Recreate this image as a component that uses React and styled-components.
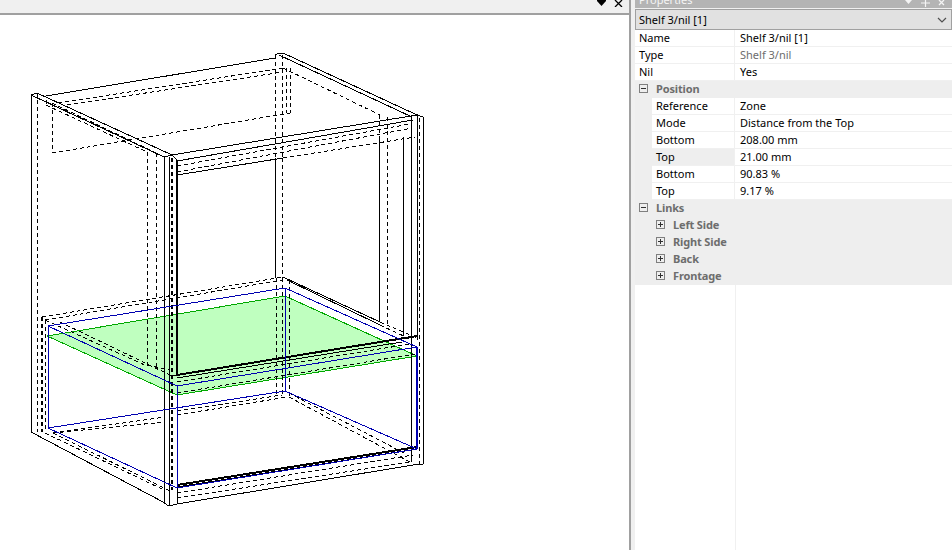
import React from 'react';
import styled, { createGlobalStyle } from 'styled-components';

const GlobalStyle = createGlobalStyle`
  html, body {
    margin: 0;
    padding: 0;
    background: #f0f0f0;
    overflow: hidden;
  }
`;

const BLACK = '#000000';
const BLUE = '#0000b0';
const GREEN = '#00a800';
const BAR_HEIGHT = 15;

// [x1, y1, x2, y2, kind] kind: s solid, d dashed, t thick, td thick dashed
const cabinetLines = [
  // left side, outer
  [31, 95, 31, 432, 's'], [37, 93, 37, 432, 'd'], [31, 95, 37, 93, 's'],
  [37, 93, 172, 155, 's'], [31, 95, 164, 157, 's'], [40, 99, 164, 157, 's'],
  [46, 105, 147, 152, 'd'], [52, 103, 156, 153, 'd'],
  // back top rail
  [46, 96, 275, 58, 's'], [58, 103, 283, 68, 'd'], [67, 105, 283, 72, 'd'],
  [52, 153, 290, 113, 'd'], [52, 103, 52, 153, 'd'], [46, 100, 46, 105, 'd'],
  [275, 55, 279, 53, 's'], [279, 53, 283, 53, 's'],
  // back corner
  [275, 55, 275, 157, 'd'], [282, 55, 282, 157, 'd'], [286, 68, 286, 113, 'd'], [290, 68, 290, 113, 'd'],
  [275, 158, 275, 278, 's'], [282, 158, 282, 278, 'd'],
  [283, 53, 415, 114, 's'], [279, 55, 412, 117, 's'], [283, 68, 380, 115, 'd'],
  // front top rail
  [172, 155, 417, 115, 's'], [177, 161, 413, 120, 's'], [177, 172, 412, 128, 'd'],
  [177, 175, 283, 158, 's'], [283, 158, 415, 137, 'd'], [177, 166, 410, 124, 'd'],
  // front corner
  [164, 157, 164, 503, 's'], [169, 157, 169, 506, 's'], [172, 158, 172, 490, 'td'],
  [177, 160, 177, 375, 't'], [147, 152, 147, 365, 'd'], [156, 153, 156, 367, 'd'],
  [164, 157, 172, 155, 's'], [172, 155, 177, 160, 's'],
  [164, 503, 169, 506, 's'], [169, 506, 177, 504, 's'], [177, 488, 177, 504, 's'],
  // right corner
  [379, 115, 379, 140, 'd'], [379, 140, 379, 322, 's'], [387, 117, 387, 325, 'd'],
  [403, 137, 403, 336, 's'], [411, 115, 411, 462, 's'], [417, 115, 417, 340, 's'],
  [419, 118, 419, 464, 'd'], [423, 117, 423, 464, 's'], [415, 114, 423, 117, 's'],
  // zone lines behind the shelf
  [42, 317, 283, 277, 'd'], [45, 320, 283, 280, 'd'], [42, 317, 42, 432, 'td'], [45, 320, 45, 432, 'd'],
  [283, 277, 380, 322, 's'], [380, 322, 417, 338, 'd'], [287, 280, 380, 325, 's'], [380, 325, 410, 339, 'd'],
  [45, 320, 147, 366, 'd'], [60, 322, 170, 375, 'd'], [147, 365, 170, 370, 'd'],
  [276, 278, 276, 395, 'd'], [282, 278, 282, 395, 'd'], [289, 280, 289, 397, 'd'],
  // rail under the shelf
  [177, 375, 417, 336, 't'], [177, 378, 402, 342, 's'], [177, 382, 410, 344, 'd'],
  [177, 393, 415, 354, 'd'], [170, 375, 177, 375, 's'],
  // floor
  [60, 432, 165, 417, 'd'], [53, 433, 165, 422, 'd'], [177, 415, 287, 397, 'd'], [177, 411, 282, 395, 'd'],
  [31, 432, 165, 503, 's'], [45, 433, 164, 490, 'd'], [53, 433, 172, 492, 'd'],
  [289, 397, 410, 462, 'd'], [289, 393, 404, 453, 'd'],
  // front bottom rail
  [177, 485, 417, 447, 't'], [177, 487, 410, 450, 's'], [177, 493, 413, 455, 'd'],
  [177, 498, 410, 462, 'd'], [177, 504, 413, 465, 's'], [413, 465, 423, 464, 's'],
];

const blueLines = [
  [48, 326, 285, 288], [48, 326, 177, 386], [177, 386, 417, 347], [285, 288, 417, 347],
  [48, 428, 285, 391], [48, 428, 177, 488], [177, 488, 417, 449], [285, 391, 417, 449],
  [48, 326, 48, 428], [177, 386, 177, 488], [285, 288, 285, 391],
];

function lineProps(kind) {
  if (kind === 'd') return { strokeWidth: 1, strokeDasharray: '4 3' };
  if (kind === 'td') return { strokeWidth: 2, strokeDasharray: '4 3' };
  if (kind === 't') return { strokeWidth: 2 };
  return { strokeWidth: 1 };
}

function CabinetDrawing() {
  return (
    <Drawing viewBox={`0 ${BAR_HEIGHT} 629 535`} width="629" height="535">
      <polygon
        points="47,336 285,296 417,356 177,395"
        fill="#bfffbf"
        stroke={GREEN}
        strokeWidth="1"
        shapeRendering="crispEdges"
      />
      <g stroke={BLACK} shapeRendering="crispEdges" fill="none">
        {cabinetLines.map(([x1, y1, x2, y2, kind], i) => (
          <line key={i} x1={x1} y1={y1} x2={x2} y2={y2} {...lineProps(kind)} />
        ))}
      </g>
      <g stroke={BLUE} shapeRendering="crispEdges" fill="none" strokeWidth="1">
        {blueLines.map(([x1, y1, x2, y2], i) => (
          <line key={i} x1={x1} y1={y1} x2={x2} y2={y2} />
        ))}
        <line x1="417" y1="347" x2="417" y2="449" strokeWidth="2" />
      </g>
    </Drawing>
  );
}

function ExpandBox({ open }) {
  return (
    <BoxIcon width="9" height="9" viewBox="0 0 9 9">
      <rect x="0.5" y="0.5" width="8" height="8" fill="none" stroke="#7f7f7f" />
      <line x1="2" y1="4.5" x2="7" y2="4.5" stroke="#303030" />
      {!open && <line x1="4.5" y1="2" x2="4.5" y2="7" stroke="#303030" />}
    </BoxIcon>
  );
}

const plainRows = [
  ['Name', 'Shelf 3/nil [1]'],
  ['Type', 'Shelf 3/nil', true],
  ['Nil', 'Yes'],
];

const positionRows = [
  ['Reference', 'Zone'],
  ['Mode', 'Distance from the Top'],
  ['Bottom', '208.00 mm'],
  ['Top', '21.00 mm', false, true],
  ['Bottom', '90.83 %'],
  ['Top', '9.17 %'],
];

const linkRows = ['Left Side', 'Right Side', 'Back', 'Frontage'];

export default function App() {
  return (
    <>
      <GlobalStyle />
      <Page>
        <ViewColumn>
          <ViewBar>
            <BarGlyphs>
              <svg width="9" height="7" viewBox="0 0 9 7">
                <path d="M0 0 H9 V1 L4.5 6 L0 1 Z" fill="#000" />
              </svg>
              <svg width="9" height="7" viewBox="0 0 9 7">
                <path d="M1 0 L8 7 M8 0 L1 7" stroke="#000" strokeWidth="1.3" fill="none" />
              </svg>
            </BarGlyphs>
          </ViewBar>
          <Canvas>
            <CabinetDrawing />
          </Canvas>
        </ViewColumn>
        <Splitter />
        <PropertiesPanel>
          <TitleBar>
            <TitleText>Properties</TitleText>
            <TitleGlyphs>
              <svg width="9" height="7" viewBox="0 0 9 7">
                <path d="M1 0 H8 L4.5 4 Z" fill="#f4f4f4" />
              </svg>
              <svg width="9" height="7" viewBox="0 0 9 7">
                <path d="M4.5 0 V7 M0 3 H9" stroke="#f4f4f4" strokeWidth="1.2" fill="none" />
              </svg>
              <svg width="9" height="7" viewBox="0 0 9 7">
                <path d="M1 0 L6 5 M6 0 L1 5" stroke="#f4f4f4" strokeWidth="1.3" fill="none" />
              </svg>
            </TitleGlyphs>
          </TitleBar>
          <ObjectSelect>
            <span>Shelf 3/nil [1]</span>
            <svg width="10" height="6" viewBox="0 0 10 6">
              <path d="M1 1 L5 5 L9 1" stroke="#505050" strokeWidth="1.2" fill="none" />
            </svg>
          </ObjectSelect>
          <Grid>
            {plainRows.map(([label, value, muted]) => (
              <Row key={label}>
                <Label>{label}</Label>
                <Value $muted={muted}>{value}</Value>
              </Row>
            ))}
            <GroupRow>
              <ExpandBox open />
              <GroupName>Position</GroupName>
            </GroupRow>
            {positionRows.map(([label, value, muted, selected], i) => (
              <Row key={i}>
                <Gutter />
                <Label $selected={selected} $indented>{label}</Label>
                <Value $muted={muted}>{value}</Value>
              </Row>
            ))}
            <GroupRow>
              <ExpandBox open />
              <GroupName>Links</GroupName>
            </GroupRow>
            {linkRows.map(label => (
              <GroupRow key={label} $nested>
                <ExpandBox />
                <GroupName>{label}</GroupName>
              </GroupRow>
            ))}
            <EmptyGrid />
          </Grid>
        </PropertiesPanel>
      </Page>
    </>
  );
}

const Page = styled.div`
  display: flex;
  width: 952px;
  height: 550px;
  overflow: hidden;
  background: #f0f0f0;
  font-family: "Noto Sans", "Liberation Sans", sans-serif;
  font-size: 11px;
  color: #000;
`;

const ViewColumn = styled.div`
  display: flex;
  flex-direction: column;
  width: 629px;
  flex: none;
`;

const ViewBar = styled.div`
  display: flex;
  justify-content: flex-end;
  height: ${BAR_HEIGHT}px;
  flex: none;
  box-sizing: border-box;
  background: #f0f0f0;
  border-bottom: 2px solid #a0a0a0;
`;

const BarGlyphs = styled.div`
  display: flex;
  align-items: flex-start;
  gap: 8px;
  padding-right: 6px;
`;

const Canvas = styled.div`
  flex: 1;
  background: #fff;
  overflow: hidden;
`;

const Drawing = styled.svg`
  display: block;
`;

const Splitter = styled.div`
  width: 2px;
  flex: none;
  margin-right: 4px;
  background: #a0a0a0;
`;

const PropertiesPanel = styled.div`
  display: flex;
  flex-direction: column;
  flex: 1;
  min-width: 0;
`;

const TitleBar = styled.div`
  display: flex;
  justify-content: space-between;
  height: 8px;
  flex: none;
  overflow: hidden;
  background: #b4b4b4;
  color: #f4f4f4;
`;

const TitleText = styled.span`
  margin: -9px 0 0 4px;
  line-height: 17px;
`;

const TitleGlyphs = styled.div`
  display: flex;
  gap: 8px;
  padding-right: 5px;
`;

const ObjectSelect = styled.div`
  display: flex;
  align-items: center;
  justify-content: space-between;
  height: 21px;
  flex: none;
  box-sizing: border-box;
  margin-top: 1px;
  padding: 0 4px 0 3px;
  background: #e1e1e1;
  border: 1px solid #a0a0a0;
`;

const Grid = styled.div`
  display: flex;
  flex-direction: column;
  flex: 1;
  background: #fff;
`;

const Row = styled.div`
  display: flex;
  height: 17px;
  flex: none;
  box-sizing: border-box;
  border-bottom: 1px solid #f0f0f0;
  line-height: 16px;
`;

const Gutter = styled.div`
  width: 17px;
  flex: none;
  margin-bottom: -1px;
  background: #eeeeee;
`;

const Label = styled.div`
  width: ${props => (props.$indented ? '83px' : '100px')};
  flex: none;
  box-sizing: border-box;
  padding-left: 4px;
  border-right: 1px solid #f0f0f0;
  background: ${props => (props.$selected ? '#eeeeee' : 'transparent')};
`;

const Value = styled.div`
  flex: 1;
  padding-left: 5px;
  color: ${props => (props.$muted ? '#6d6d6d' : '#000')};
`;

const GroupRow = styled.div`
  display: flex;
  align-items: center;
  height: 17px;
  flex: none;
  box-sizing: border-box;
  padding-left: ${props => (props.$nested ? '21px' : '4px')};
  padding-bottom: 2px;
  background: #eeeeee;
`;

const BoxIcon = styled.svg`
  flex: none;
`;

const GroupName = styled.span`
  margin-left: 8px;
  font-weight: 700;
  letter-spacing: -0.15px;
  color: #6d6d6d;
`;

const EmptyGrid = styled.div`
  flex: 1;
  margin-left: 100px;
  border-left: 1px solid #f0f0f0;
`;
